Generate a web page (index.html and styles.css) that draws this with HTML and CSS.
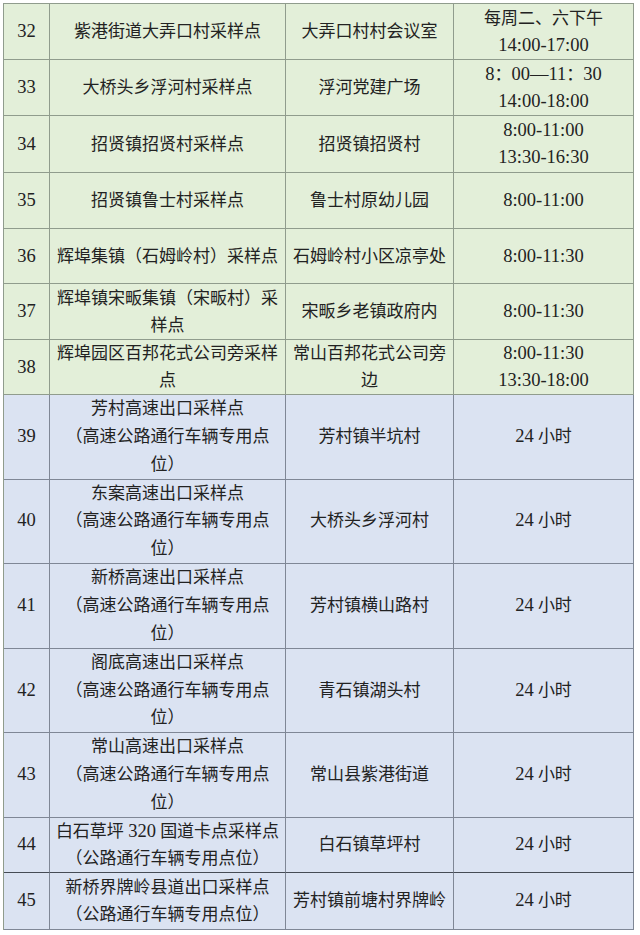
FILE: index.html
```html
<!DOCTYPE html>
<html lang="zh-CN">
<head>
<meta charset="utf-8">
<title>采样点</title>
<link rel="stylesheet" href="styles.css">
</head>
<body>
<table class="sites">
  <colgroup>
    <col class="c-no">
    <col class="c-name">
    <col class="c-place">
    <col class="c-time">
  </colgroup>
  <tbody class="green">
    <tr class="h56"><td><span class="num">32</span></td><td>紫港街道大弄口村采样点</td><td>大弄口村村会议室</td><td>每周二、六下午<br><span class="num">14:00-17:00</span></td></tr>
    <tr class="h56"><td><span class="num">33</span></td><td>大桥头乡浮河村采样点</td><td>浮河党建广场</td><td><span class="num">8</span>：<span class="num">00—11</span>：<span class="num">30</span><br><span class="num">14:00-18:00</span></td></tr>
    <tr class="h57"><td><span class="num">34</span></td><td>招贤镇招贤村采样点</td><td>招贤镇招贤村</td><td><span class="num">8:00-11:00</span><br><span class="num">13:30-16:30</span></td></tr>
    <tr class="h56"><td><span class="num">35</span></td><td>招贤镇鲁士村采样点</td><td>鲁士村原幼儿园</td><td><span class="num">8:00-11:00</span></td></tr>
    <tr class="h55"><td><span class="num">36</span></td><td>辉埠集镇（石姆岭村）采样点</td><td>石姆岭村小区凉亭处</td><td><span class="num">8:00-11:30</span></td></tr>
    <tr class="h56"><td><span class="num">37</span></td><td>辉埠镇宋畈集镇（宋畈村）采样点</td><td>宋畈乡老镇政府内</td><td><span class="num">8:00-11:30</span></td></tr>
    <tr class="h55"><td><span class="num">38</span></td><td>辉埠园区百邦花式公司旁采样点</td><td>常山百邦花式公司旁边</td><td><span class="num">8:00-11:30</span><br><span class="num">13:30-18:00</span></td></tr>
  </tbody>
  <tbody class="blue">
    <tr class="tall"><td><span class="num">39</span></td><td>芳村高速出口采样点<br>（高速公路通行车辆专用点位）</td><td>芳村镇半坑村</td><td><span class="num">24</span> 小时</td></tr>
    <tr class="tall"><td><span class="num">40</span></td><td>东案高速出口采样点<br>（高速公路通行车辆专用点位）</td><td>大桥头乡浮河村</td><td><span class="num">24</span> 小时</td></tr>
    <tr class="tall"><td><span class="num">41</span></td><td>新桥高速出口采样点<br>（高速公路通行车辆专用点位）</td><td>芳村镇横山路村</td><td><span class="num">24</span> 小时</td></tr>
    <tr class="tall"><td><span class="num">42</span></td><td>阁底高速出口采样点<br>（高速公路通行车辆专用点位）</td><td>青石镇湖头村</td><td><span class="num">24</span> 小时</td></tr>
    <tr class="tall"><td><span class="num">43</span></td><td>常山高速出口采样点<br>（高速公路通行车辆专用点位）</td><td>常山县紫港街道</td><td><span class="num">24</span> 小时</td></tr>
    <tr class="h55 dark-bottom"><td><span class="num">44</span></td><td>白石草坪 <span class="num">320</span> 国道卡点采样点<br>（公路通行车辆专用点位）</td><td>白石镇草坪村</td><td><span class="num">24</span> 小时</td></tr>
    <tr class="h57"><td><span class="num">45</span></td><td>新桥界牌岭县道出口采样点<br>（公路通行车辆专用点位）</td><td>芳村镇前塘村界牌岭</td><td><span class="num">24</span> 小时</td></tr>
  </tbody>
</table>
</body>
</html>
```

FILE: styles.css
```css
html, body {
  margin: 0;
  padding: 0;
  background: #ffffff;
}

body {
  padding: 3px 0 0 3px;
}

.sites {
  border-collapse: separate;
  border-spacing: 0;
  table-layout: fixed;
  width: 631px;
  border-top: 1px solid #909c8d;
  border-left: 1px solid #909c8d;
  font-family: "Liberation Serif", "Noto Sans CJK SC", serif;
  font-size: 17px;
  color: #222222;
  text-spacing-trim: space-all;
}

.c-no { width: 46px; }
.c-name { width: 236px; }
.c-place { width: 168px; }
.c-time { width: 180px; }

.sites td {
  box-sizing: border-box;
  padding: 0;
  text-align: center;
  vertical-align: middle;
  border-right: 1px solid #909c8d;
  border-bottom: 1px solid #909c8d;
  line-height: 27px;
  text-spacing-trim: space-all;
}

.sites tr.h55 td { height: 55px; }
.sites tr.h56 td { height: 56px; }
.sites tr.h57 td { height: 57px; }

.num {
  font-size: 18.5px;
}

.green td {
  background: #e3efd9;
}

.blue td {
  background: #dbe3f2;
  border-color: #7f8796;
}

.blue tr.tall td {
  height: 84.6px;
  line-height: 27.8px;
}

.blue tr.dark-bottom td {
  border-bottom-color: #454b55;
}
```
